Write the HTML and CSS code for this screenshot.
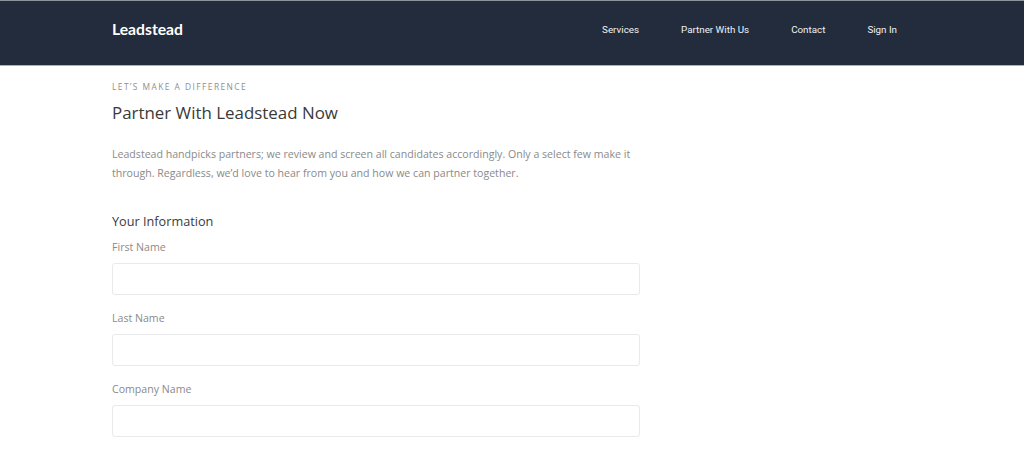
FILE: index.html
```html
<!DOCTYPE html>
<html lang="en">
<head>
<meta charset="utf-8">
<title>Leadstead</title>
<link rel="stylesheet" href="styles.css">
</head>
<body>
<header class="topbar">
  <div class="brand">Leadstead</div>
  <nav class="nav">
    <a href="#">Services</a>
    <a href="#">Partner With Us</a>
    <a href="#">Contact</a>
    <a href="#">Sign In</a>
  </nav>
</header>
<main class="content">
  <p class="eyebrow">LET’S MAKE A DIFFERENCE</p>
  <h1 class="title">Partner With Leadstead Now</h1>
  <p class="intro">Leadstead handpicks partners; we review and screen all candidates accordingly. Only a select few make it through. Regardless, we’d love to hear from you and how we can partner together.</p>
  <h2 class="section">Your Information</h2>
  <form class="form">
    <label class="field"><span class="label">First Name</span><input class="input" type="text"></label>
    <label class="field"><span class="label">Last Name</span><input class="input" type="text"></label>
    <label class="field"><span class="label">Company Name</span><input class="input" type="text"></label>
  </form>
</main>
</body>
</html>
```
FILE: styles.css
```css
* { box-sizing: border-box; }
html, body { margin: 0; padding: 0; height: 453px; overflow: hidden; background: #fff; }
body { font-family: "Open Sans", sans-serif; color: #808080; }
.topbar {
  height: 66px;
  background: #232c3d;
  border-top: 1px solid #8d939c;
  border-bottom: 1px solid #a9b3b8;
  display: flex;
  align-items: flex-start;
  justify-content: space-between;
  padding: 0 127px 0 112px;
}
.brand {
  font-family: "Lato", sans-serif;
  font-weight: 700;
  font-size: 15.7px;
  line-height: 20px;
  margin-top: 18px;
  color: #fff;
}
.nav { display: flex; gap: 42px; margin-top: 22px; }
.nav a {
  font-family: "Roboto", sans-serif;
  font-weight: 400;
  font-size: 9.8px;
  line-height: 14px;
  color: #f0f1f3;
  text-decoration: none;
}
.content { width: 640px; padding: 0 0 0 112px; }
.eyebrow {
  margin: 15px 0 0;
  font-size: 8.4px;
  line-height: 12px;
  letter-spacing: 1.45px;
  color: #8f8f8f;
}
.title {
  margin: 8px 0 0;
  font-size: 16.9px;
  line-height: 24px;
  font-weight: 400;
  color: #3a3a3a;
}
.intro {
  margin: 20px 0 0;
  font-size: 10.6px;
  line-height: 19.4px;
  color: #8a8a8a;
}
.section {
  margin: 28px 0 0;
  font-size: 12.7px;
  line-height: 18px;
  font-weight: 400;
  color: #3a3a3a;
}
.form { display: flex; flex-direction: column; gap: 16px; margin-top: 10px; }
.field { display: flex; flex-direction: column; gap: 8px; }
.label { font-size: 10.6px; line-height: 15px; color: #8a8a8a; }
.input {
  display: block;
  width: 100%;
  height: 32px;
  border: 1px solid #e9e9e9;
  border-radius: 3px;
  background: #fff;
  padding: 0 10px;
}
```
